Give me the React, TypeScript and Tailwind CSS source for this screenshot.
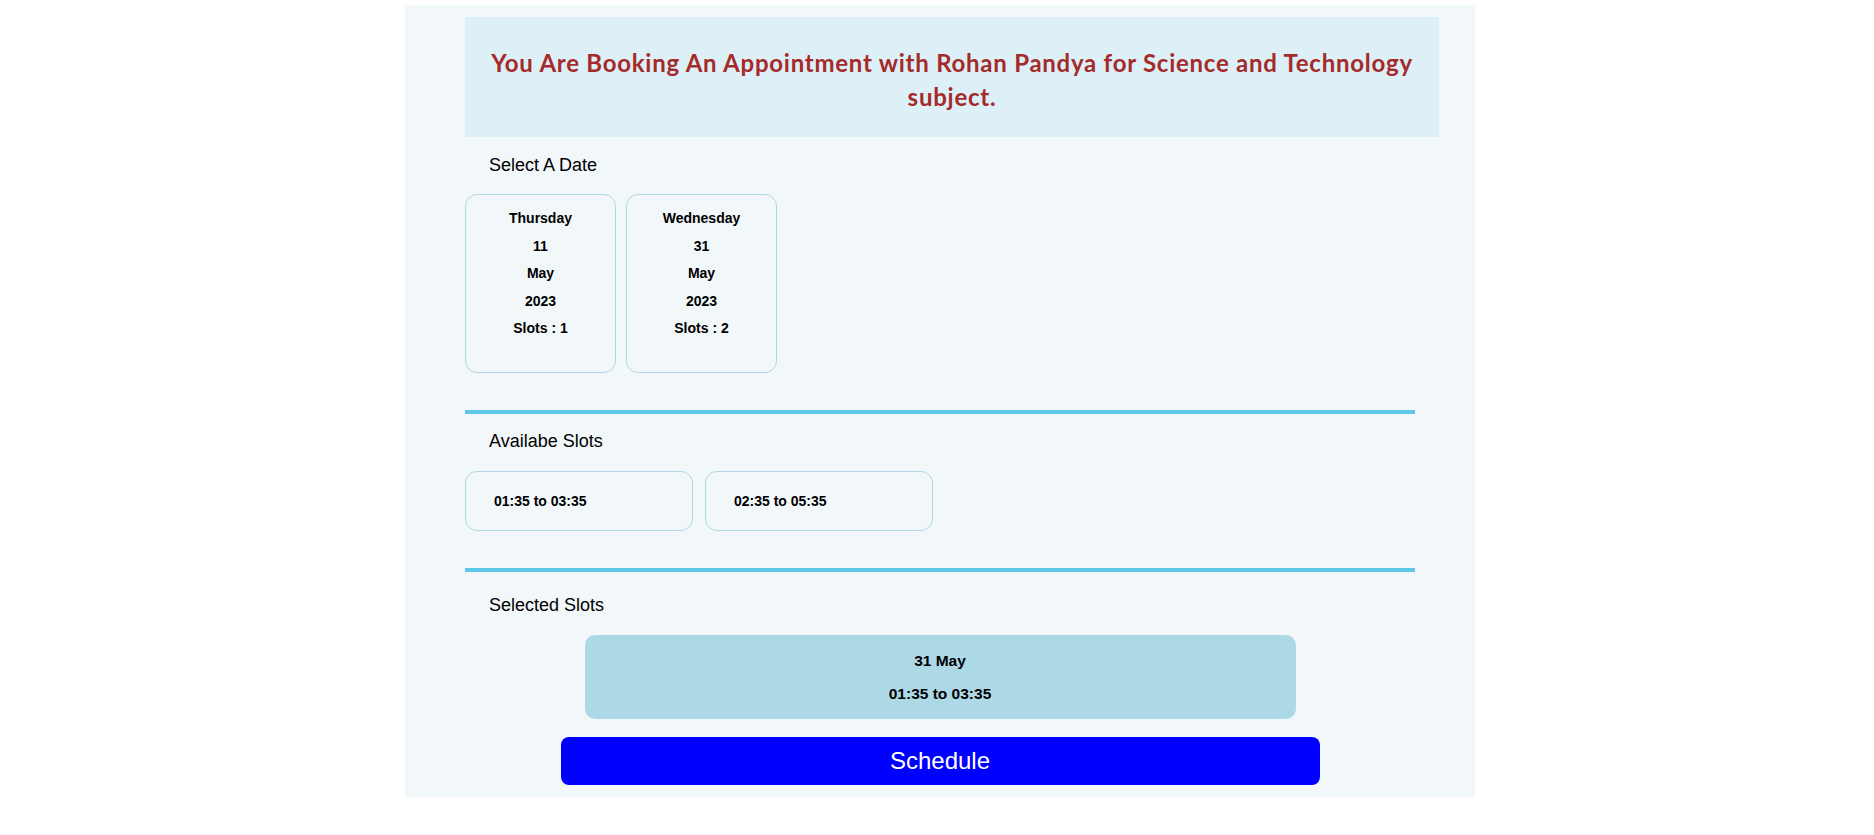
import React, { useState } from 'react'

type DateOption = {
  day: string
  date: string
  month: string
  year: string
  slots: number
}

const dates: DateOption[] = [
  { day: 'Thursday', date: '11', month: 'May', year: '2023', slots: 1 },
  { day: 'Wednesday', date: '31', month: 'May', year: '2023', slots: 2 },
]

const slots = ['01:35 to 03:35', '02:35 to 05:35']

const SectionLabel: React.FC<{ children: React.ReactNode; className?: string }> = ({ children, className }) => (
  <div className={`pl-[24px] text-[18px] leading-[21px] text-black ${className ?? ''}`}>{children}</div>
)

export default function App() {
  const [selectedDate, setSelectedDate] = useState(1)
  const [selectedSlot, setSelectedSlot] = useState(0)

  return (
    <div className="min-h-screen bg-white font-['Liberation_Sans',Arial,sans-serif]">
      <div className="flex justify-center pl-[6px] pt-[5px]">
        <div className="w-[1070px] bg-[#f2f7fa] pl-[60px] pt-[12px] pb-[12px]">
          {/* heading */}
          <div className="w-[974px] bg-[#ddf0f7] px-[22px] pt-[29px] pb-[23px]">
            <h2 className="text-center font-['Lato',sans-serif] text-[24px] font-bold leading-[34px] tracking-[0.75px] text-[#a52a2a]">
              You Are Booking An Appointment with Rohan Pandya for Science and Technology subject.
            </h2>
          </div>

          <SectionLabel className="mt-[18px]">Select A Date</SectionLabel>

          <div className="mt-[18px] flex gap-[10px]">
            {dates.map((d, i) => (
              <button
                key={d.day}
                type="button"
                onClick={() => setSelectedDate(i)}
                className="flex h-[179px] w-[151px] flex-col items-center gap-[12.5px] rounded-[12px] border border-[#add8e6] pt-[16px] text-[14px] font-bold leading-[15px] text-black"
              >
                <span>{d.day}</span>
                <span>{d.date}</span>
                <span>{d.month}</span>
                <span>{d.year}</span>
                <span>Slots : {d.slots}</span>
              </button>
            ))}
          </div>

          <div className="mt-[37px] h-[4px] w-[950px] bg-[#5ec8e8]" />

          <SectionLabel className="mt-[17px]">Availabe Slots</SectionLabel>

          <div className="mt-[19px] flex gap-[12px]">
            {slots.map((s, i) => (
              <button
                key={s}
                type="button"
                onClick={() => setSelectedSlot(i)}
                className="flex h-[60px] w-[228px] items-center rounded-[12px] border border-[#add8e6] pl-[28px] text-[14px] font-bold text-black"
              >
                {s}
              </button>
            ))}
          </div>

          <div className="mt-[37px] h-[4px] w-[950px] bg-[#5ec8e8]" />

          <SectionLabel className="mt-[23px]">Selected Slots</SectionLabel>

          <div className="-ml-[60px] flex flex-col items-center">
            <div className="mt-[19px] flex h-[84px] w-[711px] flex-col items-center gap-[18px] rounded-[10px] bg-[#add8e6] pt-[18px] text-[15.5px] font-bold leading-[15px] text-black">
              <span>
                {dates[selectedDate].date} {dates[selectedDate].month}
              </span>
              <span>{slots[selectedSlot]}</span>
            </div>

            <button
              type="button"
              className="mt-[18px] h-[48px] w-[759px] rounded-[8px] bg-[#0000ff] text-[24px] text-white"
            >
              Schedule
            </button>
          </div>
        </div>
      </div>
    </div>
  )
}
